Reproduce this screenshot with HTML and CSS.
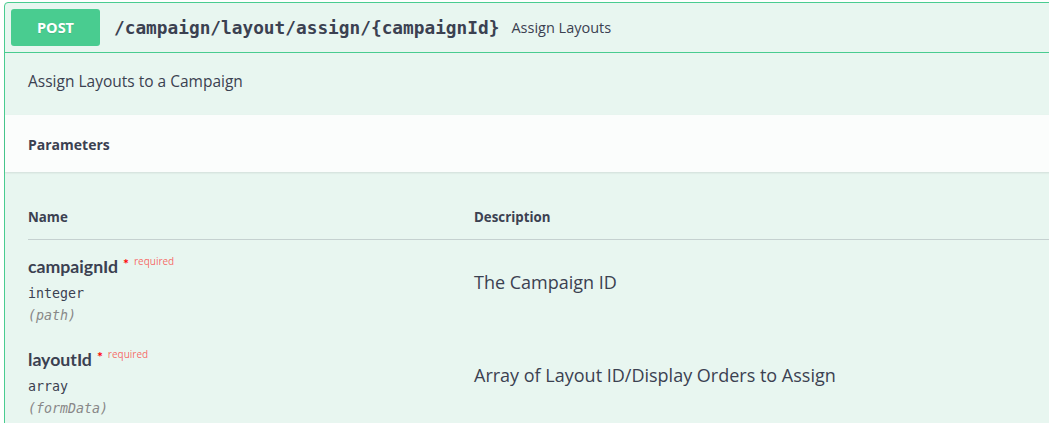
FILE: index.html
```html
<!DOCTYPE html>
<html>
<head>
<meta charset="utf-8">
<link rel="stylesheet" href="styles.css">
</head>
<body>
<div class="opblock">
  <div class="summary">
    <span class="method">POST</span>
    <span class="path">/campaign/layout/assign/{campaignId}</span>
    <span class="summary-desc">Assign Layouts</span>
  </div>
  <div class="op-desc">Assign Layouts to a Campaign</div>
  <div class="section-header"><h4>Parameters</h4></div>
  <div class="params">
    <div class="thead">
      <div class="col-name">Name</div>
      <div class="col-desc">Description</div>
    </div>
    <div class="row">
      <div class="col-name">
        <div class="pname">campaignId<span class="star">*</span><span class="req">required</span></div>
        <div class="ptype">integer</div>
        <div class="pin">(path)</div>
      </div>
      <div class="col-desc pdesc">The Campaign ID</div>
    </div>
    <div class="row">
      <div class="col-name">
        <div class="pname">layoutId<span class="star">*</span><span class="req">required</span></div>
        <div class="ptype">array</div>
        <div class="pin">(formData)</div>
      </div>
      <div class="col-desc pdesc">Array of Layout ID/Display Orders to Assign</div>
    </div>
  </div>
</div>
</body>
</html>
```
FILE: styles.css
```css
html, body {
  margin: 0;
  padding: 0;
  background: #fff;
  overflow: hidden;
}
body {
  font-family: "Open Sans", sans-serif;
  color: #3b4151;
}
.opblock {
  margin: 2px -20px 0 4px;
  border: 1px solid #49cc90;
  border-radius: 4px;
  background: #e8f6f0;
  height: 600px;
}
.summary {
  display: flex;
  align-items: center;
  padding: 6px;
  border-bottom: 1px solid #49cc90;
}
.method {
  width: 89px;
  height: 37px;
  display: flex;
  align-items: center;
  justify-content: center;
  background: #49cc90;
  border-radius: 3px;
  color: #fff;
  font-family: "Open Sans", sans-serif;
  font-weight: 700;
  font-size: 14.5px;
  text-shadow: 0 1px 0 rgba(0,0,0,.1);
}
.path {
  margin-left: 14px;
  font-family: "DejaVu Sans Mono", monospace;
  font-weight: 700;
  font-size: 17.8px;
  color: #3b4151;
}
.summary-desc {
  margin-left: 12px;
  font-size: 14.5px;
  color: #3b4151;
}
.op-desc {
  padding: 17px 23px 0;
  height: 45px;
  font-size: 15.5px;
}
.section-header {
  background: rgba(255,255,255,.8);
  box-shadow: 0 1px 2px rgba(0,0,0,.1);
  height: 57px;
  display: flex;
  align-items: center;
  padding: 0 23px 0;
}
.section-header h4 {
  margin: 2px 0 0;
  font-size: 14px;
  font-weight: 700;
}
.params {
  padding: 0 0 0 23px;
}
.thead {
  display: flex;
  padding-top: 36px;
  height: 31px;
  border-bottom: 1px solid rgba(59,65,81,.2);
  font-size: 13.3px;
  font-weight: 700;
}
.col-name {
  width: 446px;
  flex: none;
}
.row {
  display: flex;
  align-items: center;
  padding: 15px 0 0;
}
.pdesc {
  font-size: 18px;
  padding-bottom: 24px;
}
.pname {
  font-family: "Lato", sans-serif;
  font-weight: 700;
  font-size: 17.7px;
  line-height: 24px;
}
.star {
  color: red;
  font-size: 14px;
  margin-left: 5px;
  position: relative;
  top: -4px;
}
.req {
  color: rgba(255,0,0,.6);
  font-family: "Open Sans", sans-serif;
  font-weight: 400;
  font-size: 10px;
  margin-left: 5px;
  position: relative;
  top: -8px;
}
.ptype {
  font-family: "DejaVu Sans Mono", monospace;
  font-size: 13.3px;
  margin-top: 3px;
  line-height: 20px;
}
.pin {
  font-family: "DejaVu Sans Mono", monospace;
  font-style: italic;
  font-size: 13.3px;
  color: #888;
  line-height: 23px;
  padding-bottom: 6px;
}
```
